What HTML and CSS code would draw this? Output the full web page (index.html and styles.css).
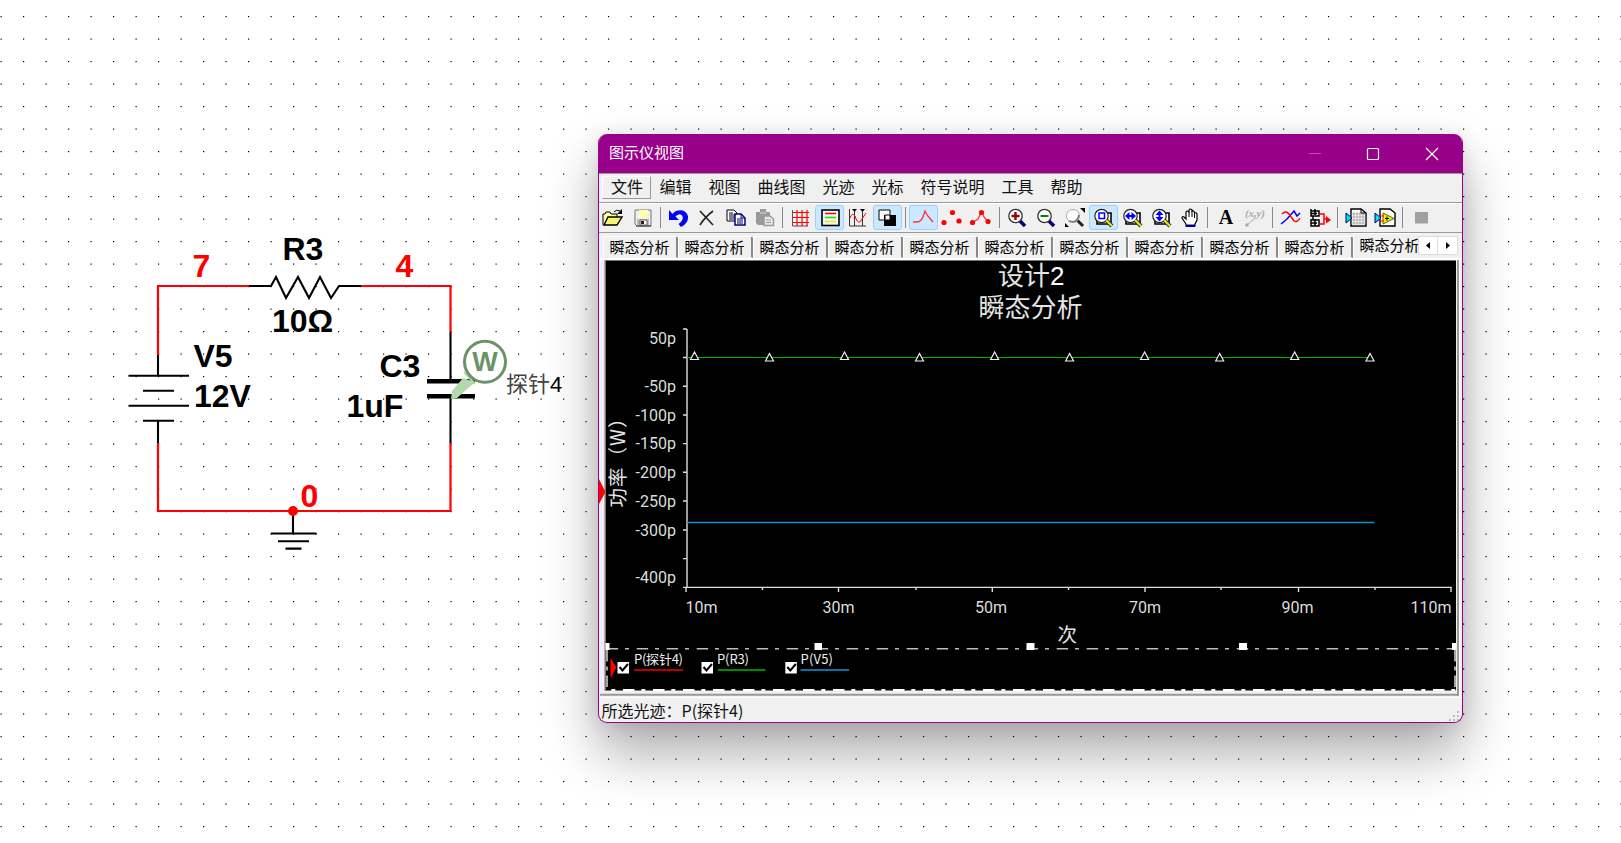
FILE: index.html
```html
<!DOCTYPE html>
<html lang="zh-CN">
<head>
<meta charset="utf-8">
<title>图示仪视图</title>
<link rel="stylesheet" href="styles.css">
</head>
<body>
<main class="workspace">
  <svg class="schematic" width="1621" height="843" viewBox="0 0 1621 843">
    <defs>
      <pattern id="dots" width="45" height="45" patternUnits="userSpaceOnUse">
        <rect x="0.5" y="16" width="1.2" height="1.2"/><rect x="23" y="16" width="1.2" height="1.2"/>
        <rect x="0.5" y="38.5" width="1.2" height="1.2"/><rect x="23" y="38.5" width="1.2" height="1.2"/>
      </pattern>
    </defs>
    <rect width="1621" height="835" fill="url(#dots)"/>
    <g class="wire">
      <path d="M249 286H158V355M158 443V511H450.500V443M361 286H450.500V332"/>
    </g>
    <g class="part">
      <path d="M158 355V375.500M158 421V443M249 286H271L276 277L286 298L298 277L309 298L320 277L331 298L339 286H361M450.500 332V381M450.500 397V443M293 513V533"/>
      <path d="M128.500 375.700H189M143 390.800H174M128.500 405.800H189M143 420.800H174M271 533.500H316.500M278 541.200H309M285.500 548.600H301.500"/>
      <path class="plate" d="M427 381.300H475M427 396.300H475"/>
    </g>
    <circle cx="293" cy="511" r="5" fill="#f00"/>
    <g class="ref">
      <text x="282.500" y="259.500">R3</text><text x="272" y="332">10Ω</text>
      <text x="193.500" y="366.500">V5</text><text x="194" y="407">12V</text>
      <text x="379.500" y="376.500">C3</text><text x="346.500" y="417">1uF</text>
      <g class="net"><text x="192.500" y="277">7</text><text x="395.500" y="277">4</text><text x="300.500" y="507">0</text></g>
    </g>
    <path d="M451 399L452 391L463 378L475 382L457 398Z" fill="#b2d8ac"/>
    <path d="M464 372L475 384" stroke="#b2d8ac" stroke-width="2"/>
    <circle cx="485" cy="361.700" r="20.500" fill="#fff" stroke="#6b9466" stroke-width="3"/>
    <text class="probe-w" x="485" y="371" text-anchor="middle">W</text>
    <text class="probe-name" x="506" y="392">探针<tspan class="num">4</tspan></text>
  </svg>

  <section class="window">
    <header class="titlebar">
      <h1>图示仪视图</h1>
      <svg class="controls" width="140" height="39" viewBox="1305 134 140 39">
        <path d="M1309 153.500H1321" stroke="#b84daa"/>
        <rect x="1367.500" y="148.500" width="11" height="11" rx="1" fill="none" stroke="#fff" stroke-width="1.200"/>
        <path d="M1426 148L1438 160M1438 148L1426 160" stroke="#fff" stroke-width="1.200"/>
      </svg>
    </header>

    <nav class="menu"><span class="hot">文件</span><span>编辑</span><span>视图</span><span>曲线图</span><span>光迹</span><span>光标</span><span>符号说明</span><span>工具</span><span>帮助</span></nav>

    <div class="toolbar">
      <i class="tool"><svg viewBox="0 0 20 20"><path d="M0 17V6H2L3 4H7L8 6H14V9" fill="#ffffa0" stroke="#000"/><path d="M1 17L5 9H19L14 17Z" fill="#f5f56c" stroke="#000" stroke-width="1.400"/><path d="M11 4Q13 1 17 3" fill="none" stroke="#000"/><path d="M19 1V6H14Z"/></svg></i>
      <i class="tool save"><svg viewBox="0 0 20 20"><path d="M2 2H18V18H4L2 16Z" fill="#eee" stroke="#777"/><path d="M6 2H15V10H6Z" fill="#ff9"/><path d="M5 9L12 2M7 10L15 3" stroke="#fff"/><path d="M4 17V11H16V17Z" fill="#bbb"/><path d="M7 12H14V17H7Z" fill="#fff" stroke="#666"/><path d="M8 13H11V16H8Z" fill="#222"/><path d="M3 18H18" stroke="#333"/></svg></i>
      <b class="sep"></b>
      <i class="tool"><svg viewBox="0 0 20 20"><path d="M1 2V12H11L7.500 8.500Q12 4.500 14.500 8Q16 12 10.500 16L13 19Q21 15 20 8Q17 0 8 3Q6 4 4.500 6Z" fill="#00f"/></svg></i>
      <i class="tool"><svg viewBox="0 0 20 20"><path d="M3 3L16 17M16 3Q8 9 3 17" fill="none" stroke="#222" stroke-width="1.600"/></svg></i>
      <i class="tool"><svg viewBox="0 0 20 20"><path d="M1 2H8L11 5V13H1Z" fill="#fff" stroke="#000"/><path d="M3 5H7M3 7H9M3 9H9M3 11H9" stroke="#000"/><path d="M9 6H15L19 10V17H9Z" fill="#fff" stroke="#000080" stroke-width="1.500"/><path d="M15 6V10H19M11 11H17M11 13H17M11 15H17" fill="none" stroke="#000080"/></svg></i>
      <i class="tool"><svg viewBox="0 0 20 20"><path d="M1 4H5V1H11V4H15V8H9V17H3L1 15Z" fill="#999"/><path d="M5 5H11" stroke="#ddd"/><path d="M9 8H15L18.500 11V17.500H9Z" fill="#e8e8e8" stroke="#999" stroke-width="1.500"/><path d="M11 12H16M11 14.500H16" stroke="#999"/></svg></i>
      <b class="sep"></b>
      <i class="tool"><svg viewBox="0 0 20 20"><path d="M1.500 2V18H17" fill="none" stroke="#555"/><path d="M2 4.500H18M2 9.500H18M2 14.500H18M6 2V18M11 2V18M16 2V18" stroke="#f00" stroke-width="1.200"/></svg></i>
      <i class="tool on"><svg viewBox="0 0 20 20"><rect x="2" y="2" width="17" height="15.500" fill="#f4f4f4" stroke="#000" stroke-width="1.600"/><path d="M5 5.500H16" stroke="#f00" stroke-width="1.500"/><path d="M5 9.500H16" stroke="#0e0" stroke-width="1.500"/><path d="M5 13.500H16" stroke="#ee0" stroke-width="1.500"/></svg></i>
      <i class="tool"><svg viewBox="0 0 20 20"><path d="M1.500 1V18H18M6.500 1V18M14.500 1V18" fill="none" stroke="#333"/><path d="M4 1H9L6.500 4ZM12 1H17L14.500 4Z"/><path d="M2 10Q4 4 7 8Q9 15 12 14Q14 11 18 5" fill="none" stroke="#f00"/></svg></i>
      <i class="tool on"><svg viewBox="0 0 20 20"><path d="M2 2H13V12H2Z" fill="#fff" stroke="#000"/><path d="M7 7H19V18H7Z"/><path d="M8 7H13V12H8Z" fill="#fff" stroke="#000"/></svg></i>
      <b class="sep"></b>
      <i class="tool on"><svg viewBox="0 0 20 20"><path d="M0 14H5Q9 13 11 6L12 3L14 7L20 14" fill="none" stroke="#f33" stroke-width="1.300"/></svg></i>
      <i class="tool"><svg viewBox="0 0 20 20"><g fill="#f00"><circle cx="2" cy="14.500" r="2.600"/><circle cx="10.500" cy="4.500" r="2.600"/><circle cx="17" cy="13" r="2.600"/></g></svg></i>
      <i class="tool"><svg viewBox="0 0 20 20"><path d="M1.500 14.500L7 11L10.500 4L13 9L17 14" fill="none" stroke="#f33" stroke-width="1.300"/><g fill="#f00"><circle cx="1.500" cy="14.500" r="2.600"/><circle cx="10.500" cy="4.500" r="2.600"/><circle cx="17" cy="13.500" r="2.600"/></g></svg></i>
      <b class="sep"></b>
      <i class="tool"><svg viewBox="0 0 20 20"><path d="M13 13L18 18" stroke="#00007a" stroke-width="3.500"/><circle cx="8.500" cy="8" r="6.700" fill="#fff" stroke="#333" stroke-width="1.300"/><path d="M4.500 8H12.500M8.500 4V12" stroke="#900" stroke-width="2.400"/></svg></i>
      <i class="tool"><svg viewBox="0 0 20 20"><path d="M13 13L18 18" stroke="#00007a" stroke-width="3.500"/><circle cx="8.500" cy="8" r="6.700" fill="#fff" stroke="#333" stroke-width="1.300"/><path d="M4.500 8H12.500" stroke="#080" stroke-width="2.200"/></svg></i>
      <i class="tool"><svg viewBox="0 0 20 20"><path d="M12 12L18 18" stroke="#222" stroke-width="3"/><circle cx="8" cy="8" r="6.500" fill="#fff" stroke="#aaa"/><path d="M4 13Q12 16 14 7" fill="none" stroke="#777" stroke-width="1.500"/><path d="M15 0H20V5ZM0 15V19H4Z"/></svg></i>
      <i class="tool on"><svg viewBox="0 0 20 20"><path d="M4 5H18V16H4Z" fill="#fff" stroke="#000" stroke-width="1.600"/><circle cx="8.500" cy="8" r="6.700" fill="#fff" stroke="#222" stroke-width="1.200"/><rect x="6" y="5" width="5.500" height="5.500" fill="none" stroke="#00f" stroke-width="1.500"/><path d="M13 12L19 18" stroke="#333" stroke-width="4"/><path d="M13 12L19 18" stroke="#ee0" stroke-width="2"/></svg></i>
      <i class="tool"><svg viewBox="0 0 20 20"><path d="M4 5H18V16H4Z" fill="#fff" stroke="#000" stroke-width="1.600"/><circle cx="8.500" cy="8" r="6.700" fill="#fff" stroke="#222" stroke-width="1.200"/><path d="M3 8L7.500 4V12ZM14 8L9.500 4V12Z" fill="#00f"/><path d="M5 8H12" stroke="#00f" stroke-width="2"/><path d="M13 12L19 18" stroke="#333" stroke-width="4"/><path d="M13 12L19 18" stroke="#ee0" stroke-width="2"/></svg></i>
      <i class="tool"><svg viewBox="0 0 20 20"><path d="M4 5H18V16H4Z" fill="#fff" stroke="#000" stroke-width="1.600"/><circle cx="8.500" cy="8" r="6.700" fill="#fff" stroke="#222" stroke-width="1.200"/><path d="M8.500 2.500L12.500 7H4.500ZM8.500 13.500L12.500 9H4.500Z" fill="#00f"/><path d="M8.500 5V11" stroke="#00f" stroke-width="2"/><path d="M13 12L19 18" stroke="#333" stroke-width="4"/><path d="M13 12L19 18" stroke="#ee0" stroke-width="2"/></svg></i>
      <i class="tool"><svg viewBox="0 0 20 20"><path d="M6 16L2 10Q2 8 4 9L6 11V4Q7 2 9 4V2Q10 0 12 2V3Q14 2 14.500 5Q17 4 17 7V12L15 16V18H6Z" fill="#fff" stroke="#000" stroke-width="1.200"/><path d="M9 4V9M12 3V9M14.500 5V10" stroke="#000"/><path d="M6 16.500H15V19H6Z" fill="#00008c"/></svg></i>
      <b class="sep"></b>
      <i class="tool letter">A</i>
      <i class="tool coord"><svg viewBox="0 0 20 20"><text x="0" y="9" textLength="20">(x,y)</text><path d="M2 17L10 10" stroke="#aaa"/><circle cx="2" cy="17" r="1.700" fill="#aaa"/></svg></i>
      <b class="sep"></b>
      <i class="tool"><svg viewBox="0 0 20 20"><path d="M0 16L6 11L13 3L16 8L19 5" fill="none" stroke="#00f" stroke-width="1.500"/><path d="M1 6Q5 2 8 6T13 13Q16 15 19 10" fill="none" stroke="#f00" stroke-width="1.400"/></svg></i>
      <i class="tool"><svg viewBox="0 0 20 20"><path d="M1 1V8H9V3H1M1 5.500H7M5 1V7M1 11V18H9V12H1M1 15H7M5 11V18M3 8V12" fill="none" stroke="#000" stroke-width="1.500"/><path d="M9 6H14V16H10M14 11H18" fill="none" stroke="#f00" stroke-width="1.500"/><path d="M16 8L21 12L16 15.500Z" fill="#f00"/></svg></i>
      <b class="sep"></b>
      <i class="tool"><svg viewBox="0 0 20 20"><path d="M5 1H15L20 5V18H5Z" fill="#fff" stroke="#000" stroke-width="1.400"/><path d="M8 4V18M11 4V18M14 4V18M17 4V18M5 6H20M5 9H20M5 12H20M5 15H20" stroke="#999" stroke-width=".8"/><path d="M15 1V5H20" fill="none" stroke="#000"/><path d="M0 5L6 10L0 15Z" fill="#0df" stroke="#006"/></svg></i>
      <i class="tool"><svg viewBox="0 0 20 20"><path d="M5 1H15L20 5V18H5Z" fill="#fff" stroke="#000" stroke-width="1.400"/><path d="M0 5L6 10L0 15Z" fill="#0df" stroke="#006"/><path d="M8 5V16L19 10.500Z" fill="#ee0" stroke="#660"/><path d="M4 8H9M4 13H9" stroke="#f00"/><path d="M10 10.500H14M12 8.500V12.500" stroke="#000"/></svg></i>
      <b class="sep"></b>
      <i class="tool"><svg viewBox="0 0 20 20"><rect x="4" y="4" width="13" height="11.500" fill="#a0a0a0"/></svg></i>
    </div>

    <div class="tabs">
      <span>瞬态分析</span><span>瞬态分析</span><span>瞬态分析</span><span>瞬态分析</span><span>瞬态分析</span><span>瞬态分析</span><span>瞬态分析</span><span>瞬态分析</span><span>瞬态分析</span><span>瞬态分析</span><span class="active">瞬态分析</span>
      <div class="scroll"><i><svg width="20" height="17"><path d="M11 5V12L7 8.500Z"/></svg></i><i><svg width="20" height="17"><path d="M8 5V12L12 8.500Z"/></svg></i></div>
    </div>

    <div class="stage">
      <svg class="plot" width="858" height="438" viewBox="599 260 858 438">
        <rect x="605.500" y="260.500" width="850.500" height="430" fill="#000"/>
        <path d="M605 691V260H1456" fill="none" stroke="#777"/>
        <path d="M599 479V504L605.500 492Z" fill="#f00"/>
        <g class="heading"><text x="998" y="285">设计<tspan class="digit">2</tspan></text><text x="978.500" y="316.500">瞬态分析</text></g>
        <g class="axis">
          <path d="M687 329V588M683 587.400H1451.500" />
          <path d="M683 329H687M683 357.500H687M683 386.200H687M683 415H687M683 443.600H687M683 472.300H687M683 501H687M683 530H687M683 558.600H687"/>
          <path d="M686 587V592M838.500 587V592M992.300 587V592M1145 587V592M1298.500 587V592M1451 587V592M762.500 587V590M916 587V590M1068.500 587V590M1221 587V590M1375 587V590"/>
        </g>
        <path d="M687 357.500H1370" stroke="#00b400" stroke-width="1.200"/>
        <path d="M687 522.500H1374.500" stroke="#0d90d8" stroke-width="1.300"/>
        <g class="marks">
          <path d="M694.500 352L698.500 359.500H690.500ZM769.500 353.500L773.500 361H765.500ZM844.500 352L848.500 359.500H840.500ZM919.500 353.500L923.500 361H915.500ZM994.600 352L998.600 359.500H990.600ZM1069.600 353.500L1073.600 361H1065.600ZM1144.600 352L1148.600 359.500H1140.600ZM1219.700 353.500L1223.700 361H1215.700ZM1294.700 352L1298.700 359.500H1290.700ZM1370 353.500L1374 361H1366Z"/>
        </g>
        <g class="scale yscale">
          <text x="676" y="344">50p</text><text x="676" y="391.500">-50p</text><text x="676" y="420.500">-100p</text><text x="676" y="449">-150p</text><text x="676" y="478">-200p</text><text x="676" y="506.500">-250p</text><text x="676" y="535.500">-300p</text><text x="676" y="583">-400p</text>
        </g>
        <g class="scale xscale">
          <text x="701.500" y="613">10m</text><text x="838.500" y="613">30m</text><text x="991" y="613">50m</text><text x="1145" y="613">70m</text><text x="1297.500" y="613">90m</text><text x="1431" y="613">110m</text>
        </g>
        <text class="title" transform="translate(625 507.500) rotate(-90)" textLength="99">功率（W）</text>
        <text class="title" x="1057.500" y="642">次</text>
        <path d="M606.700 648.700H1456" stroke="#bbb" stroke-width="1.600" stroke-dasharray="11.500 6.800 4 7.700"/>
        <path d="M605.500 690H1456" stroke="#fff" stroke-width="1.800" stroke-dasharray="11.500 6.800 4 7.700" stroke-dashoffset="12.500"/>
        <path d="M607 650V690M1455 650V690" stroke="#ccc" stroke-width="1.600" stroke-dasharray="11.500 5 4 5"/>
        <path d="M605.500 643H609.500V650H605.500ZM814.500 643H822V650H814.500ZM1026.500 643H1034.500V650H1026.500ZM1239 643H1247V650H1239ZM1452 643H1456V650H1452Z" fill="#fff"/>
        <path d="M610.500 658V678L616.500 667.500Z" fill="#f00"/>
        <g class="checks"><rect x="617.500" y="662" width="11.500" height="11.500"/><rect x="701.500" y="662" width="11.500" height="11.500"/><rect x="785.300" y="662" width="11.500" height="11.500"/>
          <path d="M619.500 667L622.500 670.500L628 664M703.500 667L706.500 670.500L712 664M787.300 667L790.300 670.500L795.800 664"/></g>
        <g class="legend"><text x="634" y="663.500" textLength="49">P(探针4)</text><text x="717" y="663.500" textLength="32">P(R3)</text><text x="800.500" y="663.500" textLength="32.500">P(V5)</text></g>
        <g stroke-width="1.800"><path d="M634 670H683" stroke="#b80000"/><path d="M718 670H765.500" stroke="#008a00"/><path d="M800.500 670H849" stroke="#0a70aa"/></g>
        <path d="M604 692.500H1457" fill="none" stroke="#f0f0f0" stroke-width="2.500"/>
        <path d="M600 694.800H1457" fill="none" stroke="#999" stroke-width="2"/>
      </svg>
      <div class="edge"></div>
    </div>

    <footer class="status"><span>所选光迹：P(探针4)</span>
      <svg width="14" height="14"><path d="M9 1h2v2H9zM5 5h2v2H5zM9 5h2v2H9zM1 9h2v2H1zM5 9h2v2H5zM9 9h2v2H9z" fill="#bbb"/></svg>
    </footer>
  </section>
</main>
</body>
</html>
```
FILE: styles.css
```css
* { box-sizing: border-box; }
body { margin: 0; background: #fff; font-family: "Noto Sans CJK SC", sans-serif; overflow: hidden; }
.workspace { position: relative; width: 1621px; height: 843px; background: #fff; }
.schematic { display: block; }
.wire path { fill: none; stroke: #f00; stroke-width: 2.2; }
.part path { fill: none; stroke: #000; stroke-width: 2.1; }
.part .plate { stroke-width: 4.5; }
.ref text { font: bold 32px "Liberation Sans", sans-serif; }
.net { fill: #f00; }
.probe-w { font: bold 27px "Liberation Sans", sans-serif; fill: #6b9466; }
.probe-name { font-size: 22px; fill: #444; }
.probe-name .num { font-family: "Liberation Sans", sans-serif; fill: #000; }

.window {
  position: absolute; left: 598px; top: 134px; width: 865px; height: 589px;
  display: flex; flex-direction: column; overflow: hidden;
  border: 1px solid #99008a; border-top: 0; border-radius: 9px; background: #f0f0f0;
  box-shadow: 0 30px 54px rgba(0, 0, 0, .33), 0 2px 20px rgba(0, 0, 0, .1);
}
.titlebar { flex: none; height: 39px; display: flex; justify-content: space-between; background: #99008a; color: #fff; padding: 0 17px 0 10px; }
.titlebar h1 { margin: 0; font-size: 15px; font-weight: 400; line-height: 35px; }
.controls { flex: none; }

.menu { flex: none; height: 29px; display: flex; padding: 2px 0 3px 3px; border-top: 1px solid #999; font-size: 16px; line-height: 21px; color: #111; }
.menu span { padding: 0 8.5px; white-space: nowrap; }
.menu .hot { border: 1px solid; border-color: #fff #999 #999 #fff; line-height: 19px; width: 49px; padding: 0 8px; }

.toolbar { flex: none; height: 31px; display: flex; align-items: center; border-top: 1px solid #999; border-bottom: 1px solid #999; box-shadow: inset 0 1px #fff; }
.tool { flex: none; width: 28.75px; height: 25px; display: flex; align-items: center; justify-content: center; border-radius: 3px; font-style: normal; }
.tool svg { width: 20px; height: 20px; overflow: visible; }
.tool.on { background: #cce8ff; border: 1px solid #99d1ff; }
.tool.save { padding-left: 2px; }
.sep { flex: none; width: 1px; height: 21px; margin: 0 3.25px; background: #888; }
.letter { font: bold 20px "Liberation Serif", serif; }
.coord text { font: italic bold 11px "Liberation Serif", serif; fill: #aaa; }

.tabs { flex: none; height: 27px; display: flex; align-items: flex-end; padding-left: 4px; border-bottom: 2px solid #fff; position: relative; }
.tabs span { flex: none; width: 75px; height: 22px; padding-left: 5.5px; font-size: 15px; line-height: 20px; border: 1px solid; border-color: #fff #888 transparent #fff; border-right-width: 2px; border-radius: 3px 3px 0 0; white-space: nowrap; color: #000; }
.tabs .active { height: 25px; width: 67px; overflow: hidden; border-right: 0; line-height: 22px; }
.scroll { position: absolute; right: 4px; top: 3px; display: flex; background: #fff; border: 1px solid #ddd; }
.scroll i { width: 19px; height: 17px; border-right: 1px solid #ddd; }
.scroll i:last-child { border: 0; }
.scroll svg { display: block; }

.stage { flex: none; height: 437px; overflow: hidden; display: flex; }
.plot { display: block; flex: none; }
.edge { width: 3px; height: 436px; background: #999; border-right: 1px solid #fff; }
.heading text { fill: #e4e4e4; font-size: 26px; }
.heading .digit { font-family: "Liberation Sans", sans-serif; fill: #fff; }
.axis path { fill: none; stroke: #ddd; stroke-width: 1.4; }
.marks path { fill: #000; stroke: #eee; stroke-width: 1.2; }
.scale text { font: 16px Roboto, sans-serif; fill: #ddd; }
.yscale text { text-anchor: end; }
.xscale text { text-anchor: middle; }
.title { font-size: 19.5px; fill: #e4e4e4; }
.checks rect { fill: #fff; }
.checks path { fill: none; stroke: #000; stroke-width: 2; }
.legend text { font-size: 13px; fill: #eee; }

.status { flex: 1; display: flex; justify-content: space-between; align-items: flex-end; border-top: 1px solid #fff; padding-left: 2.5px; font-size: 16px; color: #111; }
.status span { line-height: 24px; padding-bottom: 1px; height: 26px; }
```
